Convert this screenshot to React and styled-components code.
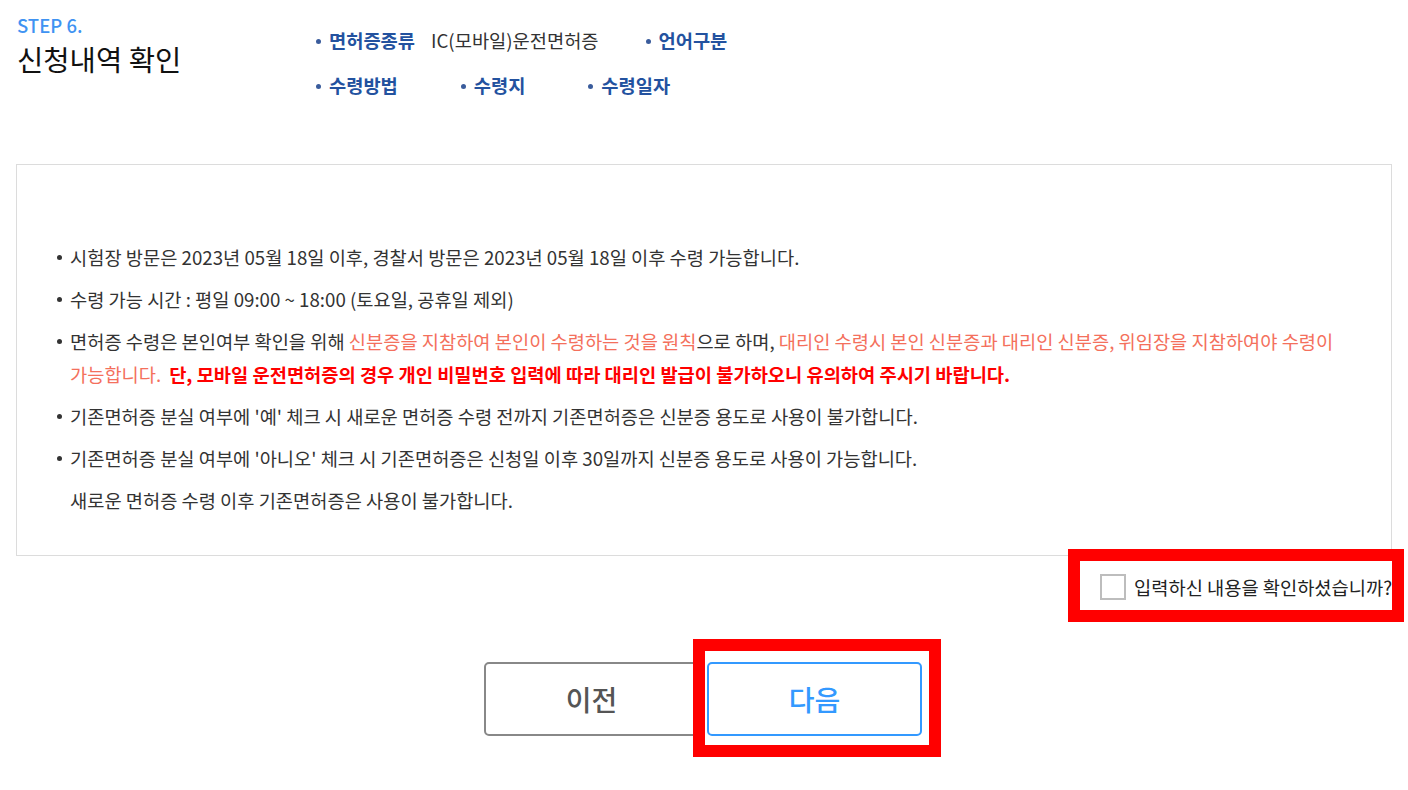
import React, { useState } from "react";
import styled, { createGlobalStyle } from "styled-components";

const GlobalStyle = createGlobalStyle`
  html, body {
    margin: 0;
    padding: 0;
    background: #fff;
    font-family: "Noto Sans CJK KR", "Noto Sans", sans-serif;
    color: #333;
  }
`;

const Page = styled.div`
  width: 1408px;
  min-height: 790px;
  padding: 0 16px 40px;
  box-sizing: border-box;
`;

const Header = styled.header`
  display: flex;
  padding-top: 13px;
  height: 164px;
  box-sizing: border-box;
`;

const TitleBlock = styled.div`
  width: 299px;
  padding-left: 1px;
`;

const Step = styled.div`
  font-size: 18.5px;
  line-height: 24px;
  font-weight: 500;
  color: #3f93f2;
`;

const Title = styled.h2`
  margin: 4px 0 0;
  font-size: 28.6px;
  line-height: 36px;
  font-weight: 400;
  color: #111;
`;

const Info = styled.div`
  display: flex;
  flex-direction: column;
  gap: 15px;
  padding-top: 12px;
`;

const InfoRow = styled.div`
  display: flex;
`;

const InfoItem = styled.div`
  display: flex;
  align-items: center;
  margin-right: 47px;
  font-size: 18.7px;
  line-height: 30px;
`;

const Label = styled.span`
  display: flex;
  align-items: center;
  color: #23529f;
  font-weight: 700;
  &::before {
    content: "";
    width: 5px;
    height: 5px;
    border-radius: 50%;
    background: #3a5c9c;
    margin-right: 8px;
    margin-top: 2px;
  }
`;

const Value = styled.span`
  margin-left: 16px;
  color: #333;
`;

const NoticeBox = styled.div`
  border: 1px solid #dcdcdc;
  padding: 75px 20px 37px 38px;
  height: 392px;
  box-sizing: border-box;
`;

const NoticeList = styled.ul`
  list-style: none;
  margin: 0;
  padding: 0;
  display: flex;
  flex-direction: column;
  gap: 9px;
`;

const NoticeItem = styled.li`
  position: relative;
  padding-left: 15px;
  font-size: 18.7px;
  line-height: 33px;
  color: #333;
  word-break: keep-all;
  &::before {
    content: "";
    display: ${(p) => (p.$plain ? "none" : "block")};
    position: absolute;
    left: 2px;
    top: 15px;
    width: 5px;
    height: 5px;
    border-radius: 50%;
    background: #333;
  }
`;

const Orange = styled.span`
  color: #f4705c;
`;

const Red = styled.b`
  color: #ff0000;
  font-weight: 700;
  margin-left: 8px;
`;

const CheckLine = styled.div`
  display: flex;
  justify-content: flex-end;
  padding-top: 18px;
`;

const CheckLabel = styled.label`
  position: relative;
  display: flex;
  align-items: center;
  gap: 8px;
  font-size: 18.7px;
  line-height: 26px;
  color: #222;
  cursor: pointer;
`;

const Box = styled.span`
  width: 26px;
  height: 26px;
  box-sizing: border-box;
  border: 2px solid ${(p) => (p.$on ? "#3399ff" : "#bdbdbd")};
  background: ${(p) => (p.$on ? "#3399ff" : "#fff")};
`;

const Highlight = styled.span`
  position: absolute;
  top: ${(p) => p.$t}px;
  left: ${(p) => p.$l}px;
  right: ${(p) => p.$r}px;
  bottom: ${(p) => p.$b}px;
  border: 12px solid #ff0000;
  pointer-events: none;
`;

const Buttons = styled.div`
  display: flex;
  justify-content: center;
  gap: 8px;
  padding-top: 62px;
  padding-right: 2px;
`;

const ButtonWrap = styled.div`
  position: relative;
  display: flex;
`;

const Button = styled.button`
  width: 215px;
  height: 74px;
  border-radius: 5px;
  background: #fff;
  font-family: inherit;
  font-size: 28px;
  font-weight: 500;
  border: 2px solid ${(p) => (p.$primary ? "#3399ff" : "#888")};
  color: ${(p) => (p.$primary ? "#3399ff" : "#555")};
  cursor: pointer;
`;

export default function App() {
  const [checked, setChecked] = useState(false);

  return (
    <Page>
      <GlobalStyle />
      <Header>
        <TitleBlock>
          <Step>STEP 6.</Step>
          <Title>신청내역 확인</Title>
        </TitleBlock>
        <Info>
          <InfoRow>
            <InfoItem>
              <Label>면허증종류</Label>
              <Value>IC(모바일)운전면허증</Value>
            </InfoItem>
            <InfoItem>
              <Label>언어구분</Label>
              <Value />
            </InfoItem>
          </InfoRow>
          <InfoRow>
            <InfoItem>
              <Label>수령방법</Label>
              <Value />
            </InfoItem>
            <InfoItem>
              <Label>수령지</Label>
              <Value />
            </InfoItem>
            <InfoItem>
              <Label>수령일자</Label>
              <Value />
            </InfoItem>
          </InfoRow>
        </Info>
      </Header>

      <NoticeBox>
        <NoticeList>
          <NoticeItem>
            시험장 방문은 2023년 05월 18일 이후, 경찰서 방문은 2023년 05월 18일 이후 수령 가능합니다.
          </NoticeItem>
          <NoticeItem>수령 가능 시간 : 평일 09:00 ~ 18:00 (토요일, 공휴일 제외)</NoticeItem>
          <NoticeItem>
            면허증 수령은 본인여부 확인을 위해 <Orange>신분증을 지참하여 본인이 수령하는 것을 원칙</Orange>으로
            하며, <Orange>대리인 수령시 본인 신분증과 대리인 신분증, 위임장을 지참하여야 수령이 가능합니다.</Orange>
            <Red>단, 모바일 운전면허증의 경우 개인 비밀번호 입력에 따라 대리인 발급이 불가하오니 유의하여 주시기 바랍니다.</Red>
          </NoticeItem>
          <NoticeItem>
            기존면허증 분실 여부에 '예' 체크 시 새로운 면허증 수령 전까지 기존면허증은 신분증 용도로 사용이 불가합니다.
          </NoticeItem>
          <NoticeItem>
            기존면허증 분실 여부에 '아니오' 체크 시 기존면허증은 신청일 이후 30일까지 신분증 용도로 사용이 가능합니다.
          </NoticeItem>
          <NoticeItem $plain>새로운 면허증 수령 이후 기존면허증은 사용이 불가합니다.</NoticeItem>
        </NoticeList>
      </NoticeBox>

      <CheckLine>
        <CheckLabel onClick={() => setChecked(!checked)}>
          <Box $on={checked} />
          입력하신 내용을 확인하셨습니까?
          <Highlight $t={-25} $l={-32} $r={-12} $b={-22} />
        </CheckLabel>
      </CheckLine>

      <Buttons>
        <Button>이전</Button>
        <ButtonWrap>
          <Button $primary>다음</Button>
          <Highlight $t={-23} $l={-14} $r={-19} $b={-21} />
        </ButtonWrap>
      </Buttons>
    </Page>
  );
}
